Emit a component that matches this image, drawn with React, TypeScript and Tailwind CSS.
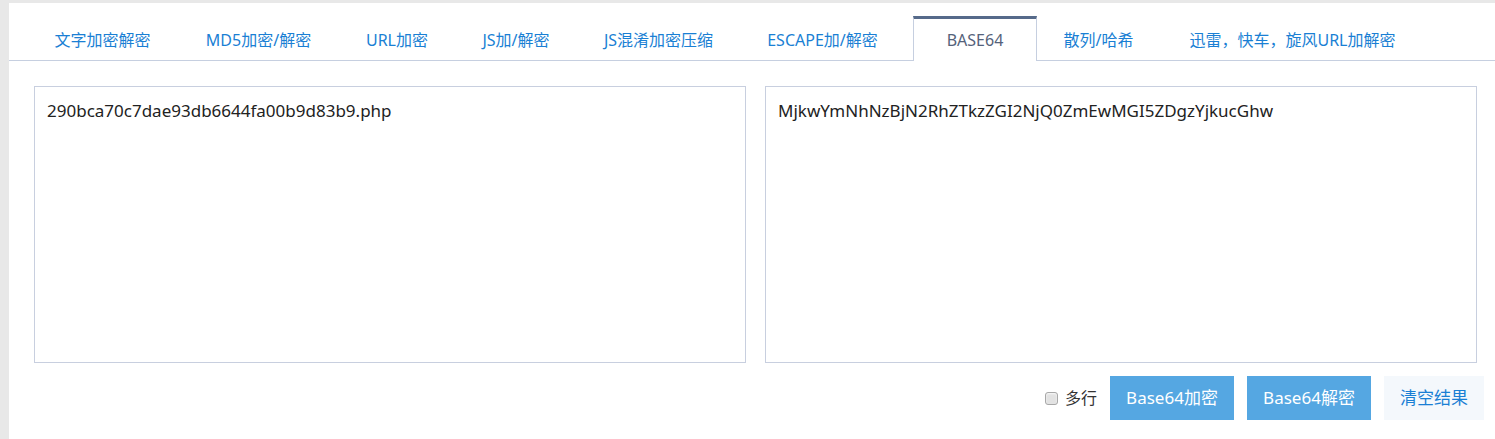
import React from "react";

const tabs: { label: string; w: string; active?: boolean }[] = [
  { label: "文字加密解密", w: "w-[135px]" },
  { label: "MD5加密/解密", w: "w-[177px]" },
  { label: "URL加密", w: "w-[100px]" },
  { label: "JS加/解密", w: "w-[138px]" },
  { label: "JS混淆加密压缩", w: "w-[147px]" },
  { label: "ESCAPE加/解密", w: "w-[181px]" },
  { label: "BASE64", w: "w-[124px]", active: true },
  { label: "散列/哈希", w: "w-[123px]" },
  { label: "迅雷，快车，旋风URL加解密", w: "w-[265px]" },
];

export default function App() {
  return (
    <div
      className="min-h-screen bg-[#e8e8e8] pl-[9px] pt-[3px]"
      style={{ fontFamily: '"Noto Sans", "Noto Sans CJK SC", sans-serif' }}
    >
      <div className="bg-white h-[436px]">
        <div className="flex items-end h-[58px] pl-[26px] border-b border-[#c6cfe0]">
          {tabs.map((t) =>
            t.active ? (
              <div
                key={t.label}
                className={`${t.w} h-[45px] -mb-px flex items-center justify-center bg-white border-x border-[#c6cfe0] border-t-[3px] border-t-[#566a8a] text-[16px] text-[#55627a] whitespace-nowrap`}
              >
                {t.label}
              </div>
            ) : (
              <div
                key={t.label}
                className={`${t.w} h-[44px] pt-[3px] flex items-center justify-center text-[16px] text-[#1a7fd4] whitespace-nowrap`}
              >
                {t.label}
              </div>
            )
          )}
        </div>

        <div className="flex gap-[19px] pl-[25px] pr-[18px] mt-[25px]">
          <textarea
            className="w-[712px] h-[277px] border border-[#c8cfdf] px-[12px] py-[12px] text-[17px] leading-[24px] text-[#222] resize-none outline-none"
            defaultValue="290bca70c7dae93db6644fa00b9d83b9.php"
          />
          <textarea
            className="w-[712px] h-[277px] border border-[#c8cfdf] px-[12px] py-[12px] text-[17px] leading-[24px] text-[#222] resize-none outline-none"
            defaultValue="MjkwYmNhNzBjN2RhZTkzZGI2NjQ0ZmEwMGI5ZDgzYjkucGhw"
          />
        </div>

        <div className="flex items-center justify-end pr-[11px] mt-[13px]">
          <label className="flex items-center mr-[13px]">
            <span className="w-[13px] h-[13px] rounded-[3px] border border-[#a8a8a8] bg-[#e2e2e2] shadow-[inset_0_1px_2px_rgba(255,255,255,0.8)]" />
            <span className="ml-[7px] text-[16px] text-[#333]">多行</span>
          </label>
          <button className="w-[124px] h-[44px] bg-[#55a7e2] text-white text-[17px]">
            Base64加密
          </button>
          <button className="w-[124px] h-[44px] ml-[13px] bg-[#55a7e2] text-white text-[17px]">
            Base64解密
          </button>
          <button className="w-[100px] h-[44px] ml-[13px] bg-[#f4f8fc] text-[#1a7fd4] text-[17px]">
            清空结果
          </button>
        </div>
      </div>
    </div>
  );
}
